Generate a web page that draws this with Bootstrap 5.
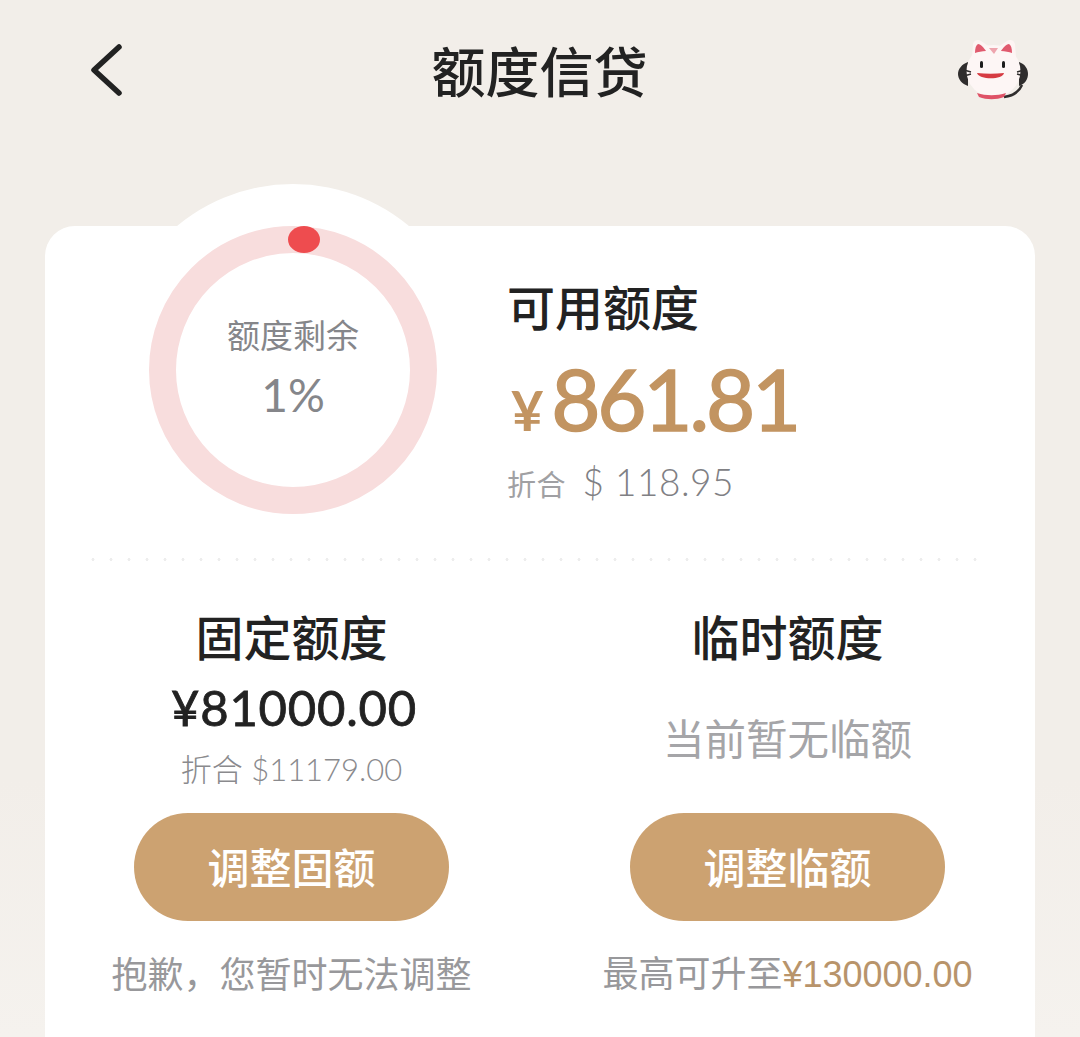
<!DOCTYPE html>
<html lang="zh-CN">
  <head>
    <meta charset="UTF-8" />
    <meta name="viewport" content="width=device-width, initial-scale=1" />
    <title>额度信贷</title>
    <link href="https://cdn.jsdelivr.net/npm/bootstrap@5.3.0/dist/css/bootstrap.min.css" rel="stylesheet" />
    <style>
      html, body { height: 100%; }
      body {
        background: linear-gradient(#f2eee9 0, #f2eee9 780px, #f5f2ee 1037px);
        font-family: "Noto Sans CJK SC", sans-serif;
        color: #222;
        overflow: hidden;
      }
      .top-bar { height: 145px; padding: 0 50px 6px 90px; }
      .top-title { font-size: 54px; font-weight: 500; line-height: 1; margin-right: 3px; }
      .quota-card {
        position: relative;
        margin: 81px 45px 0;
        height: 811px;
        background: #fff;
        border-radius: 30px 30px 0 0;
      }
      .quota-bump {
        position: absolute;
        left: 67px; top: -42px;
        width: 362px; height: 362px;
        border-radius: 50%;
        background: #fff;
      }
      .quota-top { position: relative; height: 332px; }
      .ring-box {
        position: relative;
        width: 288px; height: 288px;
        margin-left: 104px;
        border: 27px solid #f8dddd;
        border-radius: 50%;
        color: #85868a;
      }
      .ring-dot {
        position: absolute;
        left: 112px; top: -27px;
        width: 32px; height: 27px;
        border-radius: 50%;
        background: #ee4c4f;
      }
      .ring-label { font-size: 33px; line-height: 1; margin-top: -4px; }
      .ring-value { font-family: "Lato", sans-serif; font-size: 46px; line-height: 1; margin-top: 21px; }
      .avail-box { margin-left: 70px; padding-top: 55px; }
      .avail-title { font-size: 48px; font-weight: 500; line-height: 1; }
      .avail-num {
        font-family: "Lato", sans-serif;
        font-size: 85px; line-height: 1;
        letter-spacing: -3.3px; color: #c29461;
        -webkit-text-stroke: 1.5px #c29461;
        margin-top: 27px; white-space: nowrap;
      }
      .avail-num span { font-size: 56px; font-weight: 700; -webkit-text-stroke: 0; margin: 0 11px 0 4px; }
      .avail-sub { font-family: "Lato", "Noto Sans CJK SC", sans-serif; font-weight: 300; font-size: 37px; line-height: 1; color: #808084; margin-top: 22px; letter-spacing: .5px; }
      .avail-sub span { font-family: "Noto Sans CJK SC", sans-serif; font-weight: 400; font-size: 29px; margin-right: 6px; color: #a0a0a3; }
      .dot-line {
        height: 3px; margin: 0 55px 0 45px;
        background: radial-gradient(circle, #ededed 1.4px, transparent 1.6px) -6px 0 / 18px 3px repeat-x;
      }
      .quota-col { padding-top: 50px; }
      .quota-col-left { padding-right: 2px; }
      .col-title { font-size: 48px; font-weight: 500; line-height: 1; }
      .col-num {
        font-family: "Lato", sans-serif; font-size: 49px; line-height: 1;
        -webkit-text-stroke: .8px #222;
        margin-top: 24px; letter-spacing: .8px; padding-left: 5px;
      }
      .col-sub { font-family: "Lato", "Noto Sans CJK SC", sans-serif; font-weight: 300; font-size: 31px; line-height: 1; color: #8a8a8d; margin-top: 22px; height: 59px; }
      .col-empty { font-size: 41.5px; line-height: 1; color: #a5a5a8; margin-top: 58px; height: 96px; }
      .adjust-btn {
        width: 315px; height: 108px;
        background: #cca271; color: #fff;
        font-size: 42px; font-weight: 500;
        border: 0; border-radius: 54px;
        padding: 0 0 3px;
      }
      .col-note { font-size: 36px; line-height: 1; color: #98989b; margin-top: 32px; white-space: nowrap; }
      .quota-col-left .col-note { margin-top: 33px; }
      .col-note em { font-style: normal; font-family: "Liberation Sans", sans-serif; color: #b8946b; }
    </style>
  </head>
  <body>
    <!-- 顶部 -->
    <div class="top-bar d-flex align-items-center justify-content-between">
      <svg width="34" height="56" viewBox="0 0 34 56" fill="none" stroke="#222" stroke-width="5.5" stroke-linecap="round" stroke-linejoin="round"><path d="M29 5 4 28l25 23" /></svg>
      <div class="top-title">额度信贷</div>
      <!-- 客服小猫 -->
      <svg width="72" height="62" viewBox="958 38 72 62">
        <path d="M968 61c-6 2-10 7-10 12s4 10 10 12zM1019 61c6 2 9 7 9 12s-3 10-9 12z" fill="#2f2d2d" />
        <path d="M1022 84c-3 7-10 11-18 12" fill="none" stroke="#2f2d2d" stroke-width="2.5" />
        <path d="M972 56 973 43c1-4 5-5 8-3l9 6h8l9-6c3-2 7-1 8 3l1 13z" fill="#fdf4f3" />
        <ellipse cx="993.5" cy="70" rx="27" ry="26" fill="#fdf6f5" />
        <path d="M975 52c0-5 1-8 3-9 3 0 6 4 8 7-4 0-8 1-11 2zM1012 52c0-5-1-8-3-9-3 0-6 4-8 7 4 0 8 1 11 2z" fill="#e05a6e" />
        <path d="M989 47h9l-4 6z" fill="#eea5ae" />
        <rect x="980" y="60" width="3" height="7" rx="1.5" fill="#1c1c1c" />
        <rect x="1002" y="60" width="3" height="7" rx="1.5" fill="#1c1c1c" />
        <path d="M977 72c9 1 18 1 27 0-1 7-25 7-27 0z" fill="#d63b42" />
        <path d="M977 92c9 3 20 3 29 0l-2 4c-8 3-17 3-25 0z" fill="#df5267" />
        <path d="M964 69l7 2M964 75l7-2M1024 69l-7 2M1024 75l-7-2" stroke="#2f2d2d" stroke-width="1.4" />
      </svg>
    </div>

    <div class="quota-card">
      <div class="quota-bump"></div>

      <!-- 可用额度 -->
      <div class="quota-top d-flex">
        <div class="ring-box flex-shrink-0 d-flex flex-column align-items-center justify-content-center">
          <div class="ring-dot"></div>
          <div class="ring-label">额度剩余</div>
          <div class="ring-value">1%</div>
        </div>
        <div class="avail-box">
          <div class="avail-title">可用额度</div>
          <div class="avail-num"><span>¥</span>861.81</div>
          <div class="avail-sub"><span>折合</span> $ 118.95</div>
        </div>
      </div>

      <div class="dot-line"></div>

      <div class="row g-0 text-center">
        <div class="col-6 quota-col quota-col-left d-flex flex-column align-items-center">
          <div class="col-title">固定额度</div>
          <div class="col-num">¥81000.00</div>
          <div class="col-sub">折合 $11179.00</div>
          <button class="btn adjust-btn" type="button">调整固额</button>
          <div class="col-note">抱歉，您暂时无法调整</div>
        </div>
        <div class="col-6 quota-col d-flex flex-column align-items-center">
          <div class="col-title">临时额度</div>
          <div class="col-empty">当前暂无临额</div>
          <button class="btn adjust-btn" type="button">调整临额</button>
          <div class="col-note">最高可升至<em>¥130000.00</em></div>
        </div>
      </div>
    </div>

    <script src="https://cdn.jsdelivr.net/npm/bootstrap@5.3.0/dist/js/bootstrap.bundle.min.js"></script>
  </body>
</html>
